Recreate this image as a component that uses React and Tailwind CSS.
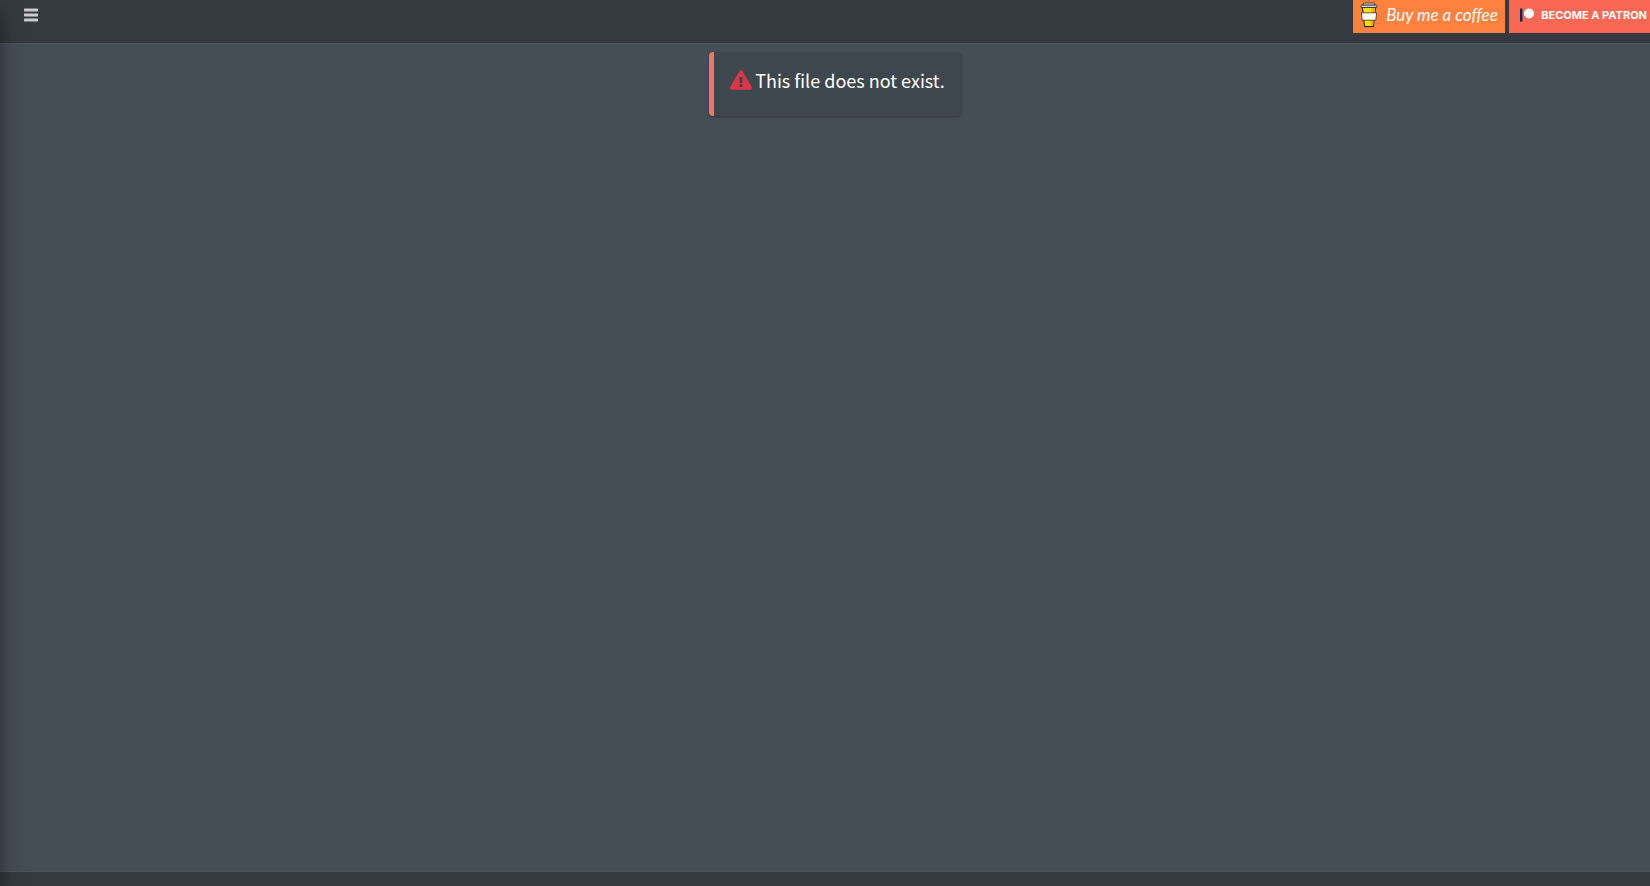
import React, { useState } from 'react';
import { FaExclamationTriangle } from 'react-icons/fa';

const MenuBars = () => (
  <svg viewBox="0 0 14 16" className="h-4 w-3.5" fill="currentColor" aria-hidden="true">
    <rect x="0" y="1.5" width="14" height="3" rx="0.4" />
    <rect x="0" y="6.5" width="14" height="3" rx="0.4" />
    <rect x="0" y="11.5" width="14" height="3" rx="0.4" />
  </svg>
);

const CoffeeCup = () => (
  <svg viewBox="0 0 18 26" className="h-[26px] w-[18px] shrink-0" aria-hidden="true">
    <path d="M2.4 5.4 L4.6 24.6 H13.4 L15.6 5.4 Z" fill="#ffdd00" stroke="#1a1a1a" strokeWidth="1" strokeLinejoin="round" />
    <path d="M11.6 6 L10.6 24 H12.8 L15 6 Z" fill="#e8b900" />
    <path d="M3.6 1 H14.4 L15.2 3.2 H2.8 Z" fill="#d5d7d8" stroke="#1a1a1a" strokeWidth="0.7" strokeLinejoin="round" />
    <path d="M1.2 3.2 H16.8 V5.4 H1.2 Z" fill="#e4e6e7" stroke="#1a1a1a" strokeWidth="0.7" strokeLinejoin="round" />
    <path d="M1.4 10.8 H16.6 L15.8 18.2 H2.2 Z" fill="#ffffff" stroke="#1a1a1a" strokeWidth="0.7" strokeLinejoin="round" />
  </svg>
);

const PatreonMark = () => (
  <svg viewBox="0 0 14 14" className="h-3.5 w-3.5 shrink-0" aria-hidden="true">
    <rect x="0" y="0.5" width="2.4" height="13" fill="#052d49" />
    <circle cx="9" cy="5.5" r="5" fill="#ffffff" />
  </svg>
);

const Navbar = ({ onToggle }) => (
  <header className="flex h-11 items-start justify-between border-b border-[#4b545c] bg-[#343a40]">
    <button
      type="button"
      onClick={onToggle}
      aria-label="Toggle menu"
      className="px-6 pt-[7px] text-base text-[#c8cacc]"
    >
      <MenuBars />
    </button>

    <div className="flex gap-1">
      <a href="#coffee" className="flex h-[33px] w-[152px] items-center gap-2 bg-[#ff813f] pb-1 pl-[7px] text-white">
        <CoffeeCup />
        <span className="whitespace-nowrap font-['Lato',cursive] text-[17px] italic leading-5">Buy me a coffee</span>
      </a>
      <a href="#patron" className="flex h-[33px] items-center gap-[7px] bg-[#f96854] pb-1 pl-[11px] pr-[3px] text-white">
        <PatreonMark />
        <span className="whitespace-nowrap font-['Inter',sans-serif] text-[11px] font-bold leading-4">BECOME A PATRON</span>
      </a>
    </div>
  </header>
);

const App = () => {
  const [open, setOpen] = useState(false);

  return (
    <div className="relative flex min-h-screen flex-col overflow-hidden bg-[#454d55] font-['Noto_Sans_CJK_SC',sans-serif]">
      <Navbar onToggle={() => setOpen(!open)} />

      <main className="flex flex-1 items-start justify-center pl-5 pt-2">
        <div role="alert" className="rounded border-l-[5px] border-[#ed7669] bg-[#3f474e] p-4 shadow-[0_1px_3px_rgba(0,0,0,0.12),0_1px_2px_rgba(0,0,0,0.24)]">
          <h5 className="mb-2 flex items-center gap-[3px] text-lg leading-6 text-white">
            <FaExclamationTriangle className="h-5 w-[22px] text-[#dc3545]" />
            This file does not exist.
          </h5>
        </div>
      </main>

      <footer className="h-[15px] border-t border-[#4b545c] bg-[#343a40]" />

      {/* Sidebar slides in over the page, its shadow stays visible when closed */}
      <aside
        className={`absolute inset-y-0 w-[250px] bg-[#343a40] shadow-[0_14px_28px_rgba(0,0,0,0.25),0_10px_10px_rgba(0,0,0,0.22)] transition-all ${
          open ? 'left-0' : '-left-[250px] pointer-events-none'
        }`}
      />
    </div>
  );
};

export default App;
